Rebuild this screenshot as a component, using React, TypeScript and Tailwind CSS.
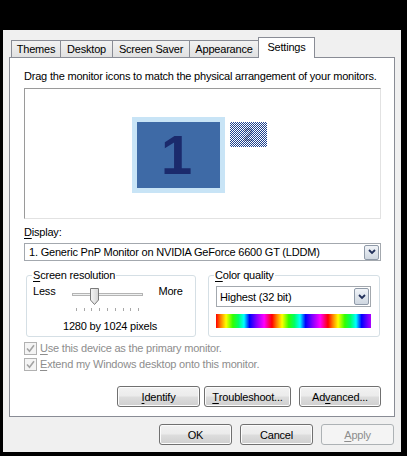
import React from "react";

function Button({
  children,
  className = "",
  disabled = false,
}: {
  children: React.ReactNode;
  className?: string;
  disabled?: boolean;
}) {
  return (
    <div
      className={
        "h-[21px] flex items-center justify-center rounded-[3px] border " +
        (disabled
          ? "border-[#adb2b5] bg-[#f4f4f4] text-[#8d8d8d] "
          : "border-[#707070] bg-[linear-gradient(180deg,#f2f2f2_0%,#ebebeb_48%,#dddddd_52%,#cfcfcf_100%)] shadow-[inset_0_0_0_1px_#fcfcfc] ") +
        className
      }
    >
      {children}
    </div>
  );
}

function U({ children }: { children: React.ReactNode }) {
  return <span className="underline underline-offset-[2px] decoration-1">{children}</span>;
}

function Chevron() {
  return (
    <svg width="8" height="6" viewBox="0 0 8 6">
      <path d="M1 1 L4 4 L7 1" stroke="#22305a" strokeWidth="1.8" fill="none" />
    </svg>
  );
}

function ArrowBtn() {
  return (
    <div className="w-[15px] h-[15px] rounded-[2px] border border-[#8f9aa8] bg-[linear-gradient(180deg,#f1f4f8_0%,#dfe5ec_50%,#cfd7e0_100%)] flex items-center justify-center">
      <Chevron />
    </div>
  );
}

function CheckBox() {
  return (
    <svg width="13" height="13" viewBox="0 0 13 13">
      <rect x="0.5" y="0.5" width="12" height="12" fill="#f4f4f4" stroke="#b1b1b1" />
      <path d="M3 6.5 L5.5 9.2 L10 3.2" stroke="#a3a3a3" strokeWidth="1.6" fill="none" />
    </svg>
  );
}

function Slider() {
  const ticks = [7, 15, 22, 30, 38, 46, 54, 61, 69];
  return (
    <svg width="76" height="26" viewBox="0 0 76 26">
      <defs>
        <linearGradient id="thumb" x1="0" y1="0" x2="1" y2="0">
          <stop offset="0" stopColor="#f6f6f6" />
          <stop offset="1" stopColor="#d4d4d4" />
        </linearGradient>
      </defs>
      <rect x="3.5" y="7.5" width="70" height="2" fill="#eef0f0" stroke="#b4b4b4" />
      {ticks.map((t) => (
        <line key={t} x1={t + 0.5} x2={t + 0.5} y1="22" y2="25" stroke="#a8a8a8" />
      ))}
      <path d="M21.5 2.5 H29.5 V14 L25.5 18.5 L21.5 14 Z" fill="url(#thumb)" stroke="#7a7a7a" />
    </svg>
  );
}

function Rainbow() {
  return (
    <svg width="155" height="14" viewBox="0 0 155 14" className="block">
      <defs>
        <linearGradient id="rb" x1="0" y1="0" x2="56" y2="0" gradientUnits="userSpaceOnUse" spreadMethod="repeat">
          <stop offset="0" stopColor="#ff0000" />
          <stop offset="0.08" stopColor="#ff7a00" />
          <stop offset="0.18" stopColor="#ffff00" />
          <stop offset="0.3" stopColor="#33ff00" />
          <stop offset="0.4" stopColor="#00ff66" />
          <stop offset="0.5" stopColor="#00ffff" />
          <stop offset="0.6" stopColor="#0000ff" />
          <stop offset="0.72" stopColor="#8000ff" />
          <stop offset="0.86" stopColor="#ff00ff" />
          <stop offset="1" stopColor="#ff0000" />
        </linearGradient>
      </defs>
      <rect x="0" y="0" width="155" height="14" fill="url(#rb)" />
    </svg>
  );
}

export default function App() {
  return (
    <div className="w-[407px] h-[456px] bg-black overflow-hidden pt-[30px] pl-[3px] font-['Liberation_Sans',Arial,sans-serif] text-[11px] leading-[14px] tracking-[-0.2px] text-black">
      <div className="w-[398px] h-[422px] bg-[#f0f0f0] pt-[7px] px-[6px] flex flex-col">
        {/* tabs */}
        <div className="h-[21px] -mb-px relative z-10 flex items-end pl-[2px]">
          <div className="h-[17px] mb-px w-[50px] border border-b-0 border-[#898c95] bg-[linear-gradient(180deg,#f2f2f2,#e1e1e1)] flex items-center justify-center">
            Themes
          </div>
          <div className="h-[17px] mb-px w-[53px] -ml-px border border-b-0 border-[#898c95] bg-[linear-gradient(180deg,#f2f2f2,#e1e1e1)] flex items-center justify-center">
            Desktop
          </div>
          <div className="h-[17px] mb-px w-[78px] -ml-px border border-b-0 border-[#898c95] bg-[linear-gradient(180deg,#f2f2f2,#e1e1e1)] flex items-center justify-center">
            Screen Saver
          </div>
          <div className="h-[17px] mb-px w-[70px] -ml-px border border-b-0 border-[#898c95] bg-[linear-gradient(180deg,#f2f2f2,#e1e1e1)] flex items-center justify-center">
            Appearance
          </div>
          <div className="h-[21px] w-[57px] -ml-px border border-b-0 border-[#898c95] bg-white flex items-start pt-[2px] justify-center">
            Settings
          </div>
        </div>

        {/* panel */}
        <div className="w-[386px] h-[360px] border border-[#898c95] bg-white pt-[11px] pl-[14px] pr-[13px] flex flex-col">
          <div>Drag the monitor icons to match the physical arrangement of your monitors.</div>

          <div className="mt-[5px] h-[131px] border border-t-[#9a9a9a] border-l-[#9a9a9a] border-r-[#e2e2e2] border-b-[#e2e2e2] bg-white pl-[107px] pt-[28px] flex items-start">
            <div className="w-[93px] h-[76px] bg-[#c8e4f6] p-[5px]">
              <div className="w-full h-full bg-[#3e6aa6] flex items-center justify-center pr-[4px]">
                <span className="text-[56px] leading-none font-bold text-[#1b2a6c] tracking-normal">1</span>
              </div>
            </div>
            <div className="ml-[5px] mt-[5px] w-[37px] h-[25px] bg-[repeating-conic-gradient(#1f4390_0_25%,#ffffff_0_50%)] bg-[length:2px_2px] flex items-center justify-center">
              <span className="text-[18px] leading-none font-bold text-[#0b1a4a] opacity-30 tracking-normal">2</span>
            </div>
          </div>

          <div className="mt-[6px]">
            <U>D</U>isplay:
          </div>
          <div className="mt-[4px] h-[18px] border border-[#a3a8ae] bg-white flex items-center pl-[4px] pr-px">
            <span className="flex-1">1. Generic PnP Monitor on NVIDIA GeForce 6600 GT (LDDM)</span>
            <ArrowBtn />
          </div>

          <div className="mt-[14px] flex">
            {/* Screen resolution */}
            <div className="ml-[2px] w-[170px] h-[62px] border border-[#d5dfe5] rounded-[3px] flex flex-col">
              <div className="-mt-[8px] ml-[5px] px-[1px] bg-white w-fit">
                <U>S</U>creen resolution
              </div>
              <div className="mt-[2px] flex items-start">
                <div className="ml-[6px]">Less</div>
                <div className="ml-[14px] mt-[2px]">
                  <Slider />
                </div>
                <div className="ml-[13px]">More</div>
              </div>
              <div className="mt-[7px] text-center pr-[2px]">1280 by 1024 pixels</div>
            </div>

            {/* Color quality */}
            <div className="ml-[12px] w-[172px] h-[62px] border border-[#d5dfe5] rounded-[3px] flex flex-col">
              <div className="-mt-[8px] ml-[5px] px-[1px] bg-white w-fit">
                <U>C</U>olor quality
              </div>
              <div className="mt-[4px] ml-[7px] w-[155px] h-[21px] border border-[#a3a8ae] bg-white flex items-center pl-[3px] pr-[1px]">
                <span className="flex-1">Highest (32 bit)</span>
                <div className="w-[15px] h-[17px] rounded-[2px] border border-[#8f9aa8] bg-[linear-gradient(180deg,#f1f4f8_0%,#dfe5ec_50%,#cfd7e0_100%)] flex items-center justify-center">
                  <Chevron />
                </div>
              </div>
              <div className="mt-[7px] ml-[7px]">
                <Rainbow />
              </div>
            </div>
          </div>

          <div className="mt-[3px] h-[16px] flex items-center text-[#8d8d8d]">
            <CheckBox />
            <span className="ml-[3px]">
              <U>U</U>se this device as the primary monitor.
            </span>
          </div>
          <div className="h-[16px] flex items-center text-[#8d8d8d]">
            <CheckBox />
            <span className="ml-[3px]">
              <U>E</U>xtend my Windows desktop onto this monitor.
            </span>
          </div>

          <div className="mt-[14px] flex justify-end">
            <Button className="w-[83px]">
              <U>I</U>dentify
            </Button>
            <Button className="w-[87px] ml-[4px]">
              <U>T</U>roubleshoot...
            </Button>
            <Button className="w-[82px] ml-[8px]">
              Ad<U>v</U>anced...
            </Button>
          </div>
        </div>

        {/* dialog buttons */}
        <div className="mt-[7px] flex justify-end gap-[8px] pr-px">
          <Button className="w-[73px]">OK</Button>
          <Button className="w-[73px]">Cancel</Button>
          <Button className="w-[73px]" disabled>
            <U>A</U>pply
          </Button>
        </div>
      </div>
    </div>
  );
}
